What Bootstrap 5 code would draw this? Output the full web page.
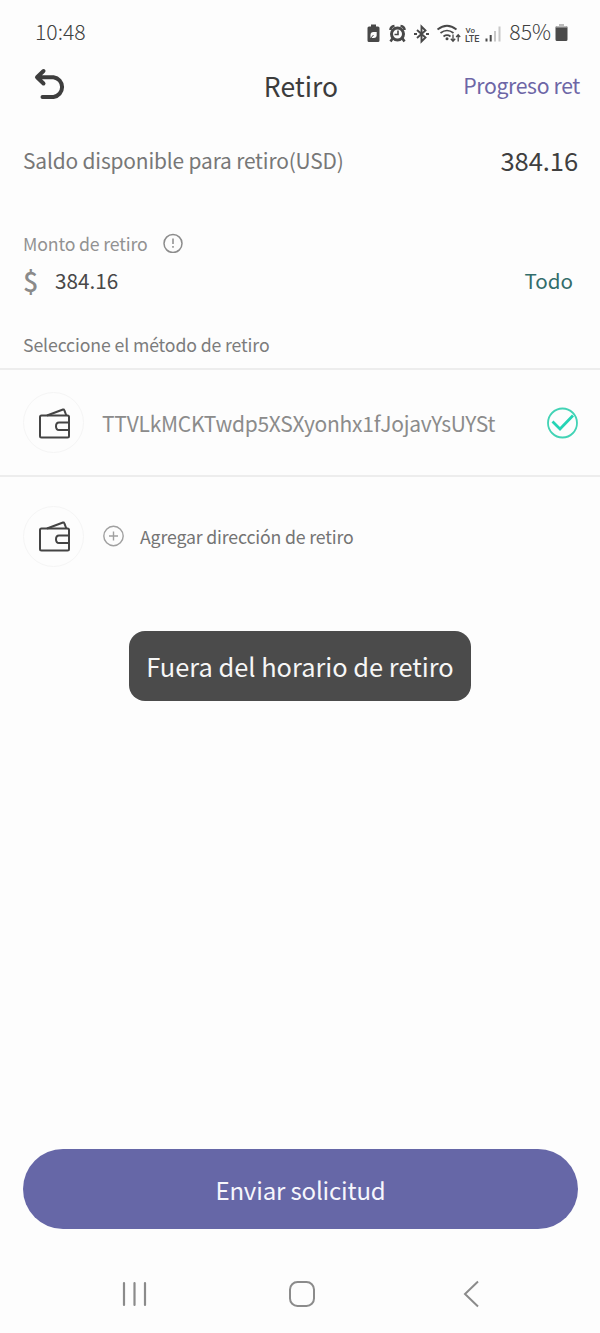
<!DOCTYPE html>
<html lang="es">
<head>
<meta charset="utf-8">
<meta name="viewport" content="width=device-width, initial-scale=1">
<title>Retiro</title>
<link href="https://cdn.jsdelivr.net/npm/bootstrap@5.3.0/dist/css/bootstrap.min.css" rel="stylesheet">
<style>
body{font-family:"Noto Sans CJK SC","Noto Sans",sans-serif;background:#fdfdfd;color:#444;line-height:1}
.screen{width:600px;height:1333px;white-space:nowrap}
.screen svg{display:block;flex:none}
.status-row{height:62px;padding:0 32px 0 35px;font-size:21.2px;color:#404040;font-weight:300}
.status-row .icons{padding-top:4px}
.head-row{height:48px;display:grid;grid-template-columns:1fr auto 1fr;padding:0 20px 0 34px}
.head-title{font-size:26.5px;color:#3c3c3c;margin-left:-12px}
.head-link{font-size:21.2px;letter-spacing:-.35px;color:#6d66a6;text-decoration:none;padding-bottom:3px}
.balance-row{height:100px;font-size:20.9px;letter-spacing:-.15px;color:#777}
.balance-row .total{font-size:25.6px;letter-spacing:-.1px;color:#3f3f3f}
.side{padding-left:23px;padding-right:22px}
.amount-label{height:36px;margin-top:15px;font-size:17.7px;letter-spacing:-.15px;color:#929292;gap:15px}
.amount-label span{padding-top:2px}
.amount-row{height:39px;color:#484848;font-size:20.7px}
.currency{width:32px;font-size:27px;color:#8a8a8a;font-weight:500}
.all-link{color:#336d6b;font-size:20.6px;text-decoration:none;margin-right:5px}
.method-label{height:50px;margin-top:18px;padding-top:3px;font-size:17.7px;letter-spacing:-.13px;color:#7c7c7c}
.method{height:107px;border-top:2px solid #ededed}
.method.add{height:120px}
.wallet{width:61px;height:61px;border:1px solid #f5f5f5;border-radius:50%}
.address{font-size:21px;letter-spacing:-.25px;color:#8b8b8b;margin-left:18px;padding-top:2px}
.add-text{font-size:17.7px;letter-spacing:-.15px;color:#747474;margin-left:16px;padding-top:1px}
.notice{left:129px;top:631px;width:342px;height:70px;padding-top:1px;border-radius:16px;background:#4b4b4b;color:#f6f6f6;font-size:25.4px}
.send{height:80px;margin:0 22px 0 23px;padding:1px 0 0;background:#6667a7;color:#f6f6fc;border:0;border-radius:40px;font-size:24px;letter-spacing:-.15px;line-height:1}
.nav-row{height:104px;padding:51px 120px 0 121px}
.home-icon{margin-right:8px}
</style>
</head>
<body>
<main class="screen position-relative d-flex flex-column overflow-hidden">
  <header class="status-row d-flex align-items-center justify-content-between">
    <span>10:48</span>
    <div class="d-flex align-items-center">
      <svg class="icons" width="142" height="28" viewBox="363 20.500 142 24" fill="none" stroke="#484848">
        <path d="M371 24h5v2h2q1.500 0 1.500 1.500v12.500q0 1.500-1.500 1.500h-9q-1.500 0-1.500-1.500v-12.500q0-1.500 1.500-1.500h2z" fill="#484848" stroke="none"/>
        <path d="M370.500 37.500v-3q0-3 3-3h3.200v3q0 3-3 3h-2.500" fill="#fdfdfd" stroke="none"/><path d="M370 38.500l3.500-4" stroke-width="1"/>
        <circle cx="397.500" cy="33.500" r="6" stroke-width="3"/>
        <path d="M398 30v4h-3.500" stroke-width="1.600"/><path d="M390.500 29.500q0-3.500 4-4M404.500 29.500q0-3.500-4-4M392.500 38l-2 3M402.500 38l2 3" stroke-width="2.600"/>
        <path d="M417 29.500l8.500 7.500-4 4V26l4 4-8.500 7.500" stroke-width="1.900"/><path d="M414 33.500h3M426 33.500h3" stroke-width="2"/>
        <path d="M437.500 29q9.500-7.500 19 0M440.500 32.500q6.500-5 13 0M443.500 36q3.500-2.600 7 0" stroke-width="1.700"/><circle cx="447" cy="38.300" r="1.500" fill="#484848" stroke="none"/>
        <path d="M453 34v6.500m-2.200-2.200l2.200 2.500 2.200-2.500M458.200 41v-6.500m-2 2l2-2.300 2 2.300" stroke-width="1.300"/>
        <g fill="#484848" stroke="none" font-family="Roboto,sans-serif" font-weight="500"><text x="465.500" y="32" font-size="8" textLength="9.500">Vo</text><text x="465" y="41" font-size="9.500" textLength="14.500" lengthAdjust="spacingAndGlyphs">LTE</text></g>
        <path d="M486.500 38v3M490.700 34.500v6.500" stroke-width="2"/><path d="M495 30.500v10.500M499.500 26v15" stroke="#c8c8c8" stroke-width="2"/>
      </svg>
      <span class="ms-1">85%</span>
      <svg class="icons ms-1" width="13" height="22" viewBox="0 0 13 18"><path d="M4 0h5v2h2q1.500 0 1.500 1.500v12q0 1.500-1.500 1.500h-9q-1.500 0-1.500-1.500v-12q0-1.500 1.500-1.500h2z" fill="#4a4a4a"/><path d="M4 0h5v2h2q1.500 0 1.500 1.500h-12q0-1.500 1.500-1.500h2z" fill="#bbb"/></svg>
    </div>
  </header>

  <nav class="head-row align-items-center">
    <svg width="34" height="38" viewBox="34 67.500 34 36" fill="none" stroke="#3e3e3e" stroke-width="4" stroke-linecap="round" stroke-linejoin="round"><path d="M43.500 70.500l-6.500 6.200 6.500 6.300M37.500 76.700h16a10 10 0 0 1 0 19.800h-11"/></svg>
    <h1 class="head-title fw-normal mb-0">Retiro</h1>
    <a href="#" class="head-link text-end">Progreso ret</a>
  </nav>

  <section class="balance-row side d-flex align-items-center justify-content-between">
    <span>Saldo disponible para retiro(USD)</span>
    <span class="total">384.16</span>
  </section>

  <section class="side">
    <div class="amount-label d-flex align-items-center">
      <span>Monto de retiro</span>
      <svg width="20" height="20" viewBox="0 0 20 20" fill="none" stroke="#8c8c8c" stroke-width="1.500"><circle cx="10" cy="10.500" r="9"/><path d="M10 5.500v5.500M10 13v1.800" stroke-width="1.500"/></svg>
    </div>
    <div class="amount-row d-flex align-items-center">
      <span class="currency">$</span>
      <span>384.16</span>
      <a href="#" class="all-link ms-auto">Todo</a>
    </div>
    <div class="method-label d-flex align-items-center">Seleccione el método de retiro</div>
  </section>

  <section>
    <div class="method side d-flex align-items-center">
      <span class="wallet d-flex align-items-center justify-content-center"><svg width="32" height="32" viewBox="38 406.500 32 32" fill="none" stroke="#444" stroke-width="2" stroke-linejoin="round"><rect x="40" y="415" width="29" height="22" rx="1.500"/><path d="M47 415l16-6q1-.3 1.300.6l2 5.400M69 422h-10q-3 0-3 3.800t3 3.800h10"/></svg></span>
      <span class="address">TTVLkMCKTwdp5XSXyonhx1fJojavYsUYSt</span>
      <svg class="ms-auto" width="32" height="32" viewBox="0 0 32 32" fill="none"><circle cx="16.500" cy="16" r="14.500" stroke="#42d3b5" stroke-width="1.800"/><path d="M6.500 14.500l7.500 7.500L27 8.500" stroke="#25d4b5" stroke-width="2.800"/></svg>
    </div>
    <div class="method add side d-flex align-items-center">
      <span class="wallet d-flex align-items-center justify-content-center"><svg width="32" height="32" viewBox="38 406.500 32 32" fill="none" stroke="#444" stroke-width="2" stroke-linejoin="round"><rect x="40" y="415" width="29" height="22" rx="1.500"/><path d="M47 415l16-6q1-.3 1.300.6l2 5.400M69 422h-10q-3 0-3 3.800t3 3.800h10"/></svg></span>
      <svg style="margin-left:18px" width="22" height="22" viewBox="0 0 22 22" fill="none" stroke="#a0a0a0" stroke-width="1.400"><circle cx="11.500" cy="11" r="9.700"/><path d="M11.500 6.500v9M7 11h9"/></svg>
      <span class="add-text">Agregar dirección de retiro</span>
    </div>
  </section>

  <div class="notice position-absolute d-flex align-items-center justify-content-center" role="status">Fuera del horario de retiro</div>

  <button type="button" class="send mt-auto">Enviar solicitud</button>
  <footer class="nav-row d-flex justify-content-between align-items-start">
    <svg width="28" height="28" viewBox="0 0 28 28" stroke="#8b8b8b" stroke-width="2.200" stroke-linecap="round"><path d="M3 3v22M13.500 3v22M24 3v22"/></svg>
    <svg class="home-icon" width="28" height="28" viewBox="0 0 28 28" fill="none" stroke="#8b8b8b" stroke-width="2"><rect x="2" y="2" width="24" height="24" rx="7.500"/></svg>
    <svg width="17" height="28" viewBox="0 0 17 28" fill="none" stroke="#8b8b8b" stroke-width="2"><path d="M15 1.500L2 14l13 12.500"/></svg>
  </footer>
</main>
<script src="https://cdn.jsdelivr.net/npm/bootstrap@5.3.0/dist/js/bootstrap.bundle.min.js"></script>
</body>
</html>
